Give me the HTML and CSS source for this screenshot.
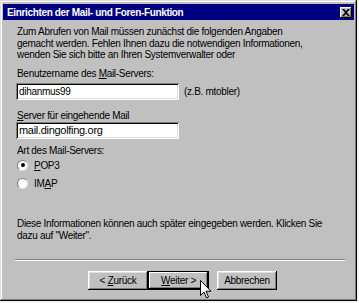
FILE: index.html
```html
<!DOCTYPE html>
<html lang="de">
<head>
<meta charset="utf-8">
<title>Einrichten der Mail- und Foren-Funktion</title>
<link rel="stylesheet" href="styles.css">
</head>
<body>
<div class="window">
  <div class="titlebar">
    <span class="title">Einrichten der Mail- und Foren-Funktion</span>
    <span class="close">
      <svg width="8" height="7" viewBox="0 0 8 7"><path d="M0 0h2l2 2 2-2h2L5 3.5 8 7H6L4 5 2 7H0l3-3.5z" fill="#000"/></svg>
    </span>
  </div>
  <div class="content">
    <p class="intro">Zum Abrufen von Mail müssen zunächst die folgenden Angaben<br>gemacht werden. Fehlen Ihnen dazu die notwendigen Informationen,<br>wenden Sie sich bitte an Ihren Systemverwalter oder</p>
    <div class="label l1">Benutzername des <u>M</u>ail-Servers:</div>
    <div class="fieldrow f1">
      <div class="field">dihanmus99</div>
      <span class="hint">(z.B. mtobler)</span>
    </div>
    <div class="label l2"><u>S</u>erver für eingehende Mail</div>
    <div class="fieldrow f2">
      <div class="field big">mail.dingolfing.org</div>
    </div>
    <div class="label l3">Art des Mail-Servers:</div>
    <div class="radio r1"><span class="dot checked"></span><span><u>P</u>OP3</span></div>
    <div class="radio r2"><span class="dot"></span><span>IM<u>A</u>P</span></div>
    <p class="note">Diese Informationen können auch später eingegeben werden. Klicken Sie<br>dazu auf "Weiter".</p>
    <div class="sep"></div>
    <div class="buttons">
      <button class="btn">&lt; <u>Z</u>urück</button>
      <button class="btn default"><u>W</u>eiter &gt;</button>
      <button class="btn cancel">Abbrechen</button>
      <svg class="cursor" width="12" height="19" viewBox="0 0 12 19"><path d="M0.5 0.5v15l3.5-3.5 2.5 6 2-1-2.5-5.8h5z" fill="#fff" stroke="#000" stroke-width="1"/></svg>
    </div>
  </div>
</div>
</body>
</html>
```

FILE: styles.css
```css
html, body {
  margin: 0;
  padding: 0;
  background: #f4f4f4;
}
body {
  font-family: "Liberation Sans", Arial, sans-serif;
  font-size: 10px;
  letter-spacing: -0.3px;
  color: #000;
}
.window {
  box-sizing: border-box;
  width: 357px;
  height: 301px;
  background: #c0c0c0;
  padding: 3px;
  box-shadow: inset -1px -1px #000, inset 1px 1px #dfdfdf, inset -2px -2px #808080, inset 2px 2px #fff;
  display: flex;
  flex-direction: column;
}
.titlebar {
  height: 16px;
  background: #000080;
  color: #fff;
  display: flex;
  align-items: center;
  justify-content: space-between;
  padding: 0 2px 0 4px;
  margin-top: 1px;
}
.title {
  font-weight: bold;
  font-size: 10px;
  letter-spacing: -0.35px;
}
.close {
  width: 12px;
  height: 11px;
  background: #c0c0c0;
  box-shadow: inset -1px -1px #000, inset 1px 1px #fff, inset -2px -2px #808080;
  display: flex;
  align-items: center;
  justify-content: center;
}
.content {
  padding: 6px 9px 0 14px;
  display: flex;
  flex-direction: column;
  flex: 1;
  white-space: nowrap;
}
p { margin: 0; }
.intro { line-height: 11.5px; }
.label { line-height: 12px; }
.l1 { margin-top: 7px; }
.l2 { margin-top: 10px; }
.l3 { margin-top: 6.5px; }
.fieldrow {
  display: flex;
  align-items: center;
  margin-left: -1px;
}
.f1 { margin-top: 3px; }
.f2 { margin-top: 0; }
.field {
  box-sizing: border-box;
  width: 163px;
  height: 17px;
  background: #fff;
  box-shadow: inset 1px 1px #808080, inset -1px -1px #fff, inset 2px 2px #000, inset -2px -2px #dfdfdf;
  padding: 0 3px;
  line-height: 17px;
  font-size: 10px;
}
.field.big {
  font-size: 11px;
  letter-spacing: -0.3px;
}
.hint { margin-left: 5px; }
.radio {
  display: flex;
  align-items: center;
  gap: 6px;
  height: 12px;
}
.r1 { margin-top: 2px; }
.r2 { margin-top: 6px; }
.dot {
  box-sizing: border-box;
  width: 11px;
  height: 11px;
  border-radius: 50%;
  background: #fff;
  border: 1px solid;
  border-color: #808080 #dfdfdf #dfdfdf #808080;
  position: relative;
}
.dot.checked::after {
  content: "";
  position: absolute;
  left: 2.5px;
  top: 2.5px;
  width: 4px;
  height: 4px;
  border-radius: 50%;
  background: #000;
}
.note {
  margin-top: 29px;
  line-height: 12px;
}
.sep {
  margin: 17px 0 0 -2px;
  height: 1px;
  background: #808080;
  border-bottom: 1px solid #fff;
}
.buttons {
  display: flex;
  margin-top: 10px;
  padding-left: 71px;
  position: relative;
}
.btn {
  box-sizing: border-box;
  width: 60px;
  height: 19px;
  padding: 0;
  font: inherit;
  letter-spacing: inherit;
  color: #000;
  background: #c0c0c0;
  border: none;
  box-shadow: inset -1px -1px #000, inset 1px 1px #fff, inset -2px -2px #808080, inset 2px 2px #dfdfdf;
}
.btn.default {
  width: 61px;
  box-shadow: inset 0 0 0 1px #000, inset -2px -2px #000, inset 2px 2px #fff, inset -3px -3px #808080;
}
.btn.cancel { margin-left: 8px; }
.cursor {
  position: absolute;
  left: 183px;
  top: 9px;
}
```
